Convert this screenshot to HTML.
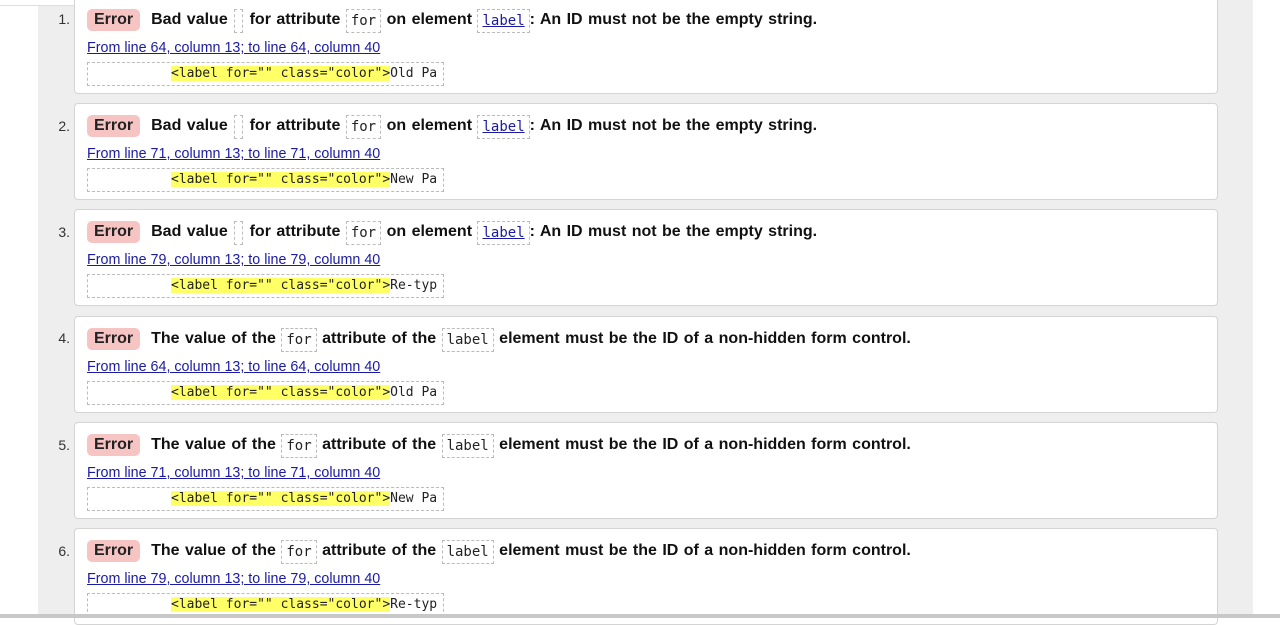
<!DOCTYPE html>
<html><head><style>
*{margin:0;padding:0;box-sizing:border-box}
body{width:1280px;height:618px;overflow:hidden;background:#fff;position:relative;font-family:"Liberation Sans",Arial,sans-serif}
.col{position:absolute;left:38px;top:0;width:1215px;height:618px;background:#eeeeee}
.topline{position:absolute;left:0;top:0;width:1155px;height:6px;background:#fff;border-bottom:1px solid #ddd;border-radius:0 0 4px 0}
.bot{position:absolute;left:0;top:614px;width:1280px;height:4px;background:#c8c8c8}
.card{position:absolute;left:74px;width:1144px;height:97px;background:#fff;border:1px solid #d4d4d4;border-radius:4px}
.num{position:absolute;left:0;width:70px;text-align:right;font-size:14px;color:#333}
.t{position:absolute;left:12px;top:11px;height:24px;font-size:16px;font-weight:bold;color:#111;white-space:nowrap;line-height:22px;word-spacing:1px}
.err{display:inline-block;background:#f7c4c4;border-radius:5px;padding:0 7px;height:22px;margin-right:11px;color:#222;word-spacing:0;vertical-align:top}
.c{font-family:"DejaVu Sans Mono",monospace;font-weight:normal;font-size:14px;border:1px dashed #bbb;padding:0 4px;display:inline-block;line-height:22px;color:#222;word-spacing:0;vertical-align:top}
.e{display:inline-block;width:9px;height:24px;vertical-align:top;border:1px dashed #bbb;margin:0 1px}
.c a{color:#1a1aa6}
.lnk{position:absolute;left:12px;top:42px;font-size:14.3px;color:#1a1aa6;text-decoration:underline;white-space:nowrap}
.code{position:absolute;left:12px;top:64px;width:357px;height:24px;border:1px dashed #bbb;font-family:"DejaVu Sans Mono",monospace;font-size:13px;line-height:22px;padding-left:83px;white-space:pre;color:#222}
.code b{font-weight:normal;background:#ffff66}
</style></head><body>
<div class="col"></div>
<div class="topline"></div>

<div class="card" style="top:-3px"><div class="t"><span class="err">Error</span>Bad value <span class="e"></span> for attribute <span class="c">for</span> on element <span class="c"><a href="#">label</a></span>: An ID must not be the empty string.</div><div class="lnk">From line 64, column 13; to line 64, column 40</div><div class="code"><b>&lt;label for="" class="color"&gt;</b>Old Pa</div></div>
<div class="num" style="top:11px">1.</div>

<div class="card" style="top:103px"><div class="t"><span class="err">Error</span>Bad value <span class="e"></span> for attribute <span class="c">for</span> on element <span class="c"><a href="#">label</a></span>: An ID must not be the empty string.</div><div class="lnk">From line 71, column 13; to line 71, column 40</div><div class="code"><b>&lt;label for="" class="color"&gt;</b>New Pa</div></div>
<div class="num" style="top:118px">2.</div>

<div class="card" style="top:209px"><div class="t"><span class="err">Error</span>Bad value <span class="e"></span> for attribute <span class="c">for</span> on element <span class="c"><a href="#">label</a></span>: An ID must not be the empty string.</div><div class="lnk">From line 79, column 13; to line 79, column 40</div><div class="code"><b>&lt;label for="" class="color"&gt;</b>Re-typ</div></div>
<div class="num" style="top:224px">3.</div>

<div class="card" style="top:316px"><div class="t"><span class="err">Error</span>The value of the <span class="c">for</span> attribute of the <span class="c">label</span> element must be the ID of a non-hidden form control.</div><div class="lnk">From line 64, column 13; to line 64, column 40</div><div class="code"><b>&lt;label for="" class="color"&gt;</b>Old Pa</div></div>
<div class="num" style="top:330px">4.</div>

<div class="card" style="top:422px"><div class="t"><span class="err">Error</span>The value of the <span class="c">for</span> attribute of the <span class="c">label</span> element must be the ID of a non-hidden form control.</div><div class="lnk">From line 71, column 13; to line 71, column 40</div><div class="code"><b>&lt;label for="" class="color"&gt;</b>New Pa</div></div>
<div class="num" style="top:437px">5.</div>

<div class="card" style="top:528px"><div class="t"><span class="err">Error</span>The value of the <span class="c">for</span> attribute of the <span class="c">label</span> element must be the ID of a non-hidden form control.</div><div class="lnk">From line 79, column 13; to line 79, column 40</div><div class="code"><b>&lt;label for="" class="color"&gt;</b>Re-typ</div></div>
<div class="num" style="top:543px">6.</div>

<div class="bot"></div>
</body></html>
